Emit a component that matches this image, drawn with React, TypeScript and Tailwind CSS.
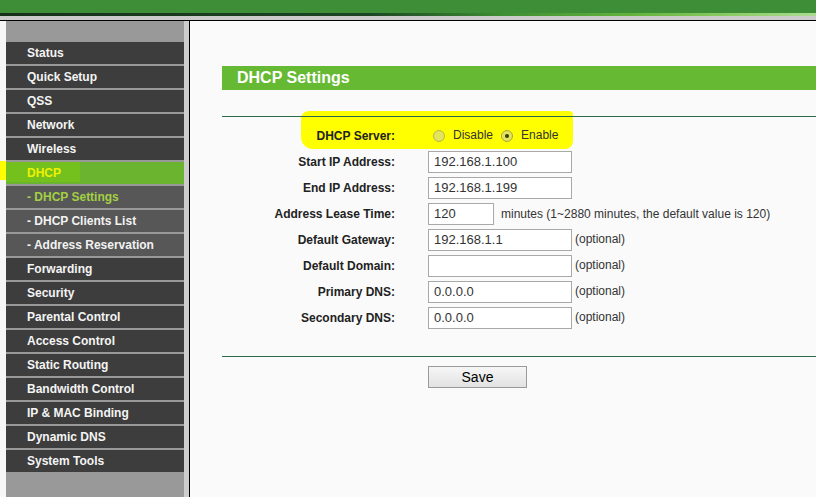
import React from "react";

const menu: { label: string; kind: "main" | "active" | "sub" | "subActive" }[] = [
  { label: "Status", kind: "main" },
  { label: "Quick Setup", kind: "main" },
  { label: "QSS", kind: "main" },
  { label: "Network", kind: "main" },
  { label: "Wireless", kind: "main" },
  { label: "DHCP", kind: "active" },
  { label: "- DHCP Settings", kind: "subActive" },
  { label: "- DHCP Clients List", kind: "sub" },
  { label: "- Address Reservation", kind: "sub" },
  { label: "Forwarding", kind: "main" },
  { label: "Security", kind: "main" },
  { label: "Parental Control", kind: "main" },
  { label: "Access Control", kind: "main" },
  { label: "Static Routing", kind: "main" },
  { label: "Bandwidth Control", kind: "main" },
  { label: "IP & MAC Binding", kind: "main" },
  { label: "Dynamic DNS", kind: "main" },
  { label: "System Tools", kind: "main" },
];

function MenuItem({ label, kind }: { label: string; kind: string }) {
  if (kind === "active") {
    return (
      <div className="relative h-[22px] bg-[#6ab42f] flex items-center pl-[21px]">
        <div className="absolute left-0 top-0 w-[74px] h-[20px] bg-[#74c01c]" />
        <span className="relative text-[12px] font-bold text-[#eef200]">{label}</span>
      </div>
    );
  }
  if (kind === "sub" || kind === "subActive") {
    return (
      <div className="h-[22px] bg-[#575757] flex items-center pl-[21px]">
        <span className={kind === "subActive" ? "text-[12px] font-bold text-[#a3d043]" : "text-[12px] font-bold text-[#f2f2f2]"}>
          {label}
        </span>
      </div>
    );
  }
  return (
    <div className="h-[22px] bg-[#3d3d3d] flex items-center pl-[21px]">
      <span className="text-[12px] font-bold text-[#f4f4f4]">{label}</span>
    </div>
  );
}

function Field({ value, w = "w-[144px]" }: { value: string; w?: string }) {
  return (
    <div className={`${w} h-[22px] bg-white border border-[#a9a9a9] flex items-center pl-[5px] text-[13px] text-[#333]`}>
      {value}
    </div>
  );
}

function Row({ label, children }: { label: string; children: React.ReactNode }) {
  return (
    <div className="relative flex items-center h-[26px]">
      <div className="w-[173px] text-right text-[12px] font-bold text-[#222]">{label}</div>
      <div className="ml-[33px] flex items-center">{children}</div>
    </div>
  );
}

function Optional() {
  return <span className="ml-[3px] text-[12px] text-[#333] -mt-[2px]">(optional)</span>;
}

export default function App() {
  return (
    <div className="relative w-[816px] h-[497px] overflow-hidden bg-[#fafafa] font-['Liberation_Sans',Arial,sans-serif]">
      {/* top bars */}
      <div className="h-[13px] bg-[#3e8e37]" />
      <div className="h-[3px] bg-[linear-gradient(to_right,#17301a_0%,#1c4424_45%,#3f8f33_62%,#66b43e_78%,#8ccc66_90%,#aadb92_100%)]" />
      <div className="h-[4px] bg-[#cbcbcb]" />
      <div className="h-px bg-black" />

      <div className="flex h-[476px]">
        <div className="w-[6px] bg-[#f7f7f7]" />
        <div className="w-[178px] bg-[#999999] pt-[21px] flex flex-col gap-[2px]">
          {menu.map((m) => (
            <MenuItem key={m.label} label={m.label} kind={m.kind} />
          ))}
        </div>
        <div className="w-[5px] bg-[#cdcdcd]" />
        <div className="w-px bg-black" />

        <div className="relative flex-1 bg-[#fafafa] pl-[32px] pt-[45px]">
          {/* yellow marker highlight */}
          <div className="absolute left-[111px] top-[90px] w-[272px] h-[38px] bg-[#ffff00] rounded-[8px] rounded-tr-[4px] rounded-bl-[12px]" />

          <div className="h-[24px] bg-[#66b933] pl-[15px] flex items-center text-[16px] font-bold text-white">
            DHCP Settings
          </div>
          <div className="relative mt-[26px] h-px bg-[#2a6b4a]" />

          <div className="mt-[6px] flex flex-col">
            <Row label="DHCP Server:">
              <span className="ml-[5px] w-[12px] h-[12px] rounded-full border border-[#b8b848] bg-[#e4e45c]" />
              <span className="ml-[8px] text-[12px] text-[#333] -mt-[3px]">Disable</span>
              <span className="ml-[8px] w-[12px] h-[12px] rounded-full border border-[#a8a840] bg-[#e4e45c] flex items-center justify-center">
                <span className="w-[4px] h-[4px] rounded-full bg-[#3c3c14]" />
              </span>
              <span className="ml-[8px] text-[12px] text-[#333] -mt-[3px]">Enable</span>
            </Row>
            <Row label="Start IP Address:">
              <Field value="192.168.1.100" />
            </Row>
            <Row label="End IP Address:">
              <Field value="192.168.1.199" />
            </Row>
            <Row label="Address Lease Time:">
              <Field value="120" w="w-[66px]" />
              <span className="ml-[7px] text-[12px] text-[#333]">minutes (1~2880 minutes, the default value is 120)</span>
            </Row>
            <Row label="Default Gateway:">
              <Field value="192.168.1.1" />
              <Optional />
            </Row>
            <Row label="Default Domain:">
              <Field value="" />
              <Optional />
            </Row>
            <Row label="Primary DNS:">
              <Field value="0.0.0.0" />
              <Optional />
            </Row>
            <Row label="Secondary DNS:">
              <Field value="0.0.0.0" />
              <Optional />
            </Row>
          </div>

          <div className="mt-[25px] h-px bg-[#2a6b4a]" />
          <button className="mt-[9px] ml-[206px] w-[99px] h-[22px] border border-[#9a9a9a] bg-[linear-gradient(to_bottom,#f6f6f6,#e2e2e2)] text-[14px] text-black flex items-center justify-center">
            Save
          </button>
        </div>
      </div>

      {/* yellow marker on sidebar edge */}
      <div className="absolute left-0 top-[161px] w-[6px] h-[19px] bg-[#ffff00]" />
    </div>
  );
}
